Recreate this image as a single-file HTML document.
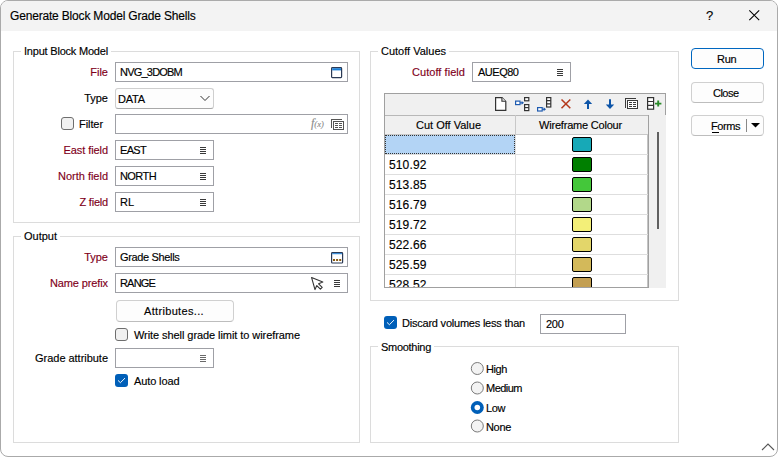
<!DOCTYPE html>
<html><head><meta charset="utf-8"><style>
html,body{margin:0;padding:0;width:778px;height:457px;overflow:hidden;background:#fff;}
body{position:relative;font-family:"Liberation Sans",sans-serif;}
div{position:absolute;}
.t{white-space:nowrap;-webkit-text-stroke:0.15px currentColor;}
</style></head><body>
<div style="left:0;top:0;width:778px;height:457px;border:1px solid #aaaaaa;border-radius:8px;box-sizing:border-box;background:#fff;overflow:hidden;"><div style="left:0;top:0;width:776px;height:30px;background:#f3f3f3;"></div></div>
<div class="t" style="left:10px;top:9px;font-size:12px;line-height:14px;color:#000;letter-spacing:-0.179px;">Generate Block Model Grade Shells</div>
<div class="t" style="left:706px;top:8px;font-size:13px;line-height:15px;color:#000;letter-spacing:-1.234px;">?</div>
<svg style="position:absolute;left:748px;top:9px" width="13" height="13"><path d="M1.3 1.3 L11.2 11.2 M11.2 1.3 L1.3 11.2" stroke="#000" stroke-width="1.05"/></svg>
<div style="left:13px;top:51px;width:347px;height:172px;border:1px solid #dcdcdc;box-sizing:border-box;"></div>
<div style="left:21px;top:46px;width:90px;height:10px;background:#fff;"></div>
<div class="t" style="left:24px;top:45px;font-size:11px;line-height:13px;color:#000;letter-spacing:-0.206px;">Input Block Model</div>
<div class="t" style="right:670px;top:66px;font-size:11px;line-height:13px;color:#80001a;text-align:right;">File</div>
<div style="left:115px;top:62px;width:233px;height:20px;border:1px solid #9fa0a6;box-sizing:border-box;background:#fff;"></div>
<div class="t" style="left:120px;top:66px;font-size:11px;line-height:13px;color:#000;letter-spacing:-0.788px;">NVG_3DOBM</div>
<div class="t" style="right:670px;top:92px;font-size:11px;line-height:13px;color:#000;text-align:right;">Type</div>
<div style="left:115px;top:88px;width:99px;height:21px;border:1px solid #cfcfcf;border-bottom-color:#a8a8a8;border-radius:3px;box-sizing:border-box;background:#fdfdfd;"></div>
<div class="t" style="left:118px;top:93px;font-size:11px;line-height:13px;color:#000;letter-spacing:-0.180px;">DATA</div>
<svg style="position:absolute;left:200px;top:95px" width="10" height="7"><path d="M0.5 1 L5 5.5 L9.5 1" stroke="#333" stroke-width="1" fill="none"/></svg>
<div style="left:61px;top:117px;width:13px;height:13px;border-radius:3px;border:1px solid #6e6e6e;box-sizing:border-box;background:#f1f1f1;"></div>
<div class="t" style="left:79px;top:118px;font-size:11px;line-height:13px;color:#000;letter-spacing:-0.073px;">Filter</div>
<div style="left:115px;top:114px;width:233px;height:20px;border:1px solid #9fa0a6;box-sizing:border-box;background:#fff;"></div>
<div class="t" style="right:670px;top:144px;font-size:11px;line-height:13px;color:#80001a;letter-spacing:-0.078px;text-align:right;">East field</div>
<div style="left:115px;top:140px;width:99px;height:20px;border:1px solid #9fa0a6;box-sizing:border-box;background:#fff;"></div>
<div class="t" style="left:120px;top:144px;font-size:11px;line-height:13px;color:#000;letter-spacing:-0.688px;">EAST</div>
<div style="left:200px;top:147px;width:6px;height:1px;background:#3a3a3a;"></div>
<div style="left:200px;top:149px;width:6px;height:1px;background:#3a3a3a;"></div>
<div style="left:200px;top:151px;width:6px;height:1px;background:#3a3a3a;"></div>
<div style="left:200px;top:153px;width:6px;height:1px;background:#3a3a3a;"></div>
<div class="t" style="right:670px;top:170px;font-size:11px;line-height:13px;color:#80001a;letter-spacing:-0.014px;text-align:right;">North field</div>
<div style="left:115px;top:166px;width:99px;height:20px;border:1px solid #9fa0a6;box-sizing:border-box;background:#fff;"></div>
<div class="t" style="left:120px;top:170px;font-size:11px;line-height:13px;color:#000;letter-spacing:-0.578px;">NORTH</div>
<div style="left:200px;top:173px;width:6px;height:1px;background:#3a3a3a;"></div>
<div style="left:200px;top:175px;width:6px;height:1px;background:#3a3a3a;"></div>
<div style="left:200px;top:177px;width:6px;height:1px;background:#3a3a3a;"></div>
<div style="left:200px;top:179px;width:6px;height:1px;background:#3a3a3a;"></div>
<div class="t" style="right:670px;top:196px;font-size:11px;line-height:13px;color:#80001a;letter-spacing:-0.210px;text-align:right;">Z field</div>
<div style="left:115px;top:192px;width:99px;height:20px;border:1px solid #9fa0a6;box-sizing:border-box;background:#fff;"></div>
<div class="t" style="left:120px;top:196px;font-size:11px;line-height:13px;color:#000;">RL</div>
<div style="left:200px;top:199px;width:6px;height:1px;background:#3a3a3a;"></div>
<div style="left:200px;top:201px;width:6px;height:1px;background:#3a3a3a;"></div>
<div style="left:200px;top:203px;width:6px;height:1px;background:#3a3a3a;"></div>
<div style="left:200px;top:205px;width:6px;height:1px;background:#3a3a3a;"></div>
<div style="left:13px;top:236px;width:347px;height:207px;border:1px solid #dcdcdc;box-sizing:border-box;"></div>
<div style="left:21px;top:231px;width:39.0625px;height:10px;background:#fff;"></div>
<div class="t" style="left:24px;top:230px;font-size:11px;line-height:13px;color:#000;">Output</div>
<div class="t" style="right:670px;top:251px;font-size:11px;line-height:13px;color:#80001a;text-align:right;">Type</div>
<div style="left:115px;top:247px;width:233px;height:20px;border:1px solid #9fa0a6;box-sizing:border-box;background:#fff;"></div>
<div class="t" style="left:120px;top:251px;font-size:11px;line-height:13px;color:#000;letter-spacing:-0.344px;">Grade Shells</div>
<div class="t" style="right:670px;top:277px;font-size:11px;line-height:13px;color:#80001a;letter-spacing:-0.119px;text-align:right;">Name prefix</div>
<div style="left:115px;top:273px;width:233px;height:20px;border:1px solid #9fa0a6;box-sizing:border-box;background:#fff;"></div>
<div class="t" style="left:120px;top:277px;font-size:11px;line-height:13px;color:#000;letter-spacing:-0.825px;">RANGE</div>
<div style="left:334px;top:280px;width:6px;height:1px;background:#3a3a3a;"></div>
<div style="left:334px;top:282px;width:6px;height:1px;background:#3a3a3a;"></div>
<div style="left:334px;top:284px;width:6px;height:1px;background:#3a3a3a;"></div>
<div style="left:334px;top:286px;width:6px;height:1px;background:#3a3a3a;"></div>
<div style="left:116px;top:300px;width:118px;height:22px;border:1px solid #d0d0d0;border-bottom-color:#bdbdbd;border-radius:4px;box-sizing:border-box;background:#fdfdfd;"></div>
<div class="t" style="left:144px;top:305px;font-size:11px;line-height:13px;color:#000;letter-spacing:0.332px;">Attributes...</div>
<div style="left:115px;top:328px;width:13px;height:13px;border-radius:3px;border:1px solid #6e6e6e;box-sizing:border-box;background:#f1f1f1;"></div>
<div class="t" style="left:134px;top:329px;font-size:11px;line-height:13px;color:#000;letter-spacing:-0.071px;">Write shell grade limit to wireframe</div>
<div class="t" style="right:670px;top:352px;font-size:11px;line-height:13px;color:#000;letter-spacing:-0.029px;text-align:right;">Grade attribute</div>
<div style="left:115px;top:348px;width:99px;height:20px;border:1px solid #9fa0a6;box-sizing:border-box;background:#fff;"></div>
<div style="left:200px;top:355px;width:6px;height:1px;background:#6a6a6a;"></div>
<div style="left:200px;top:357px;width:6px;height:1px;background:#6a6a6a;"></div>
<div style="left:200px;top:359px;width:6px;height:1px;background:#6a6a6a;"></div>
<div style="left:200px;top:361px;width:6px;height:1px;background:#6a6a6a;"></div>
<div style="left:115px;top:374px;width:13px;height:13px;border-radius:3px;background:#005fb8;"></div>
<svg style="position:absolute;left:115px;top:374px" width="13" height="13"><path d="M3 6.4 L5.4 8.7 L10 4.1" stroke="#fff" stroke-width="0.95" fill="none"/></svg>
<div class="t" style="left:134px;top:375px;font-size:11px;line-height:13px;color:#000;letter-spacing:-0.115px;">Auto load</div>
<div style="left:370px;top:51px;width:309px;height:250px;border:1px solid #dcdcdc;box-sizing:border-box;"></div>
<div style="left:378px;top:46px;width:71px;height:10px;background:#fff;"></div>
<div class="t" style="left:381px;top:45px;font-size:11px;line-height:13px;color:#000;">Cutoff Values</div>
<div class="t" style="right:313px;top:66px;font-size:11px;line-height:13px;color:#80001a;letter-spacing:0.048px;text-align:right;">Cutoff field</div>
<div style="left:472px;top:62px;width:99px;height:20px;border:1px solid #9fa0a6;box-sizing:border-box;background:#fff;"></div>
<div class="t" style="left:478px;top:66px;font-size:11px;line-height:13px;color:#000;letter-spacing:-0.490px;">AUEQ80</div>
<div style="left:557px;top:69px;width:6px;height:1px;background:#3a3a3a;"></div>
<div style="left:557px;top:71px;width:6px;height:1px;background:#3a3a3a;"></div>
<div style="left:557px;top:73px;width:6px;height:1px;background:#3a3a3a;"></div>
<div style="left:557px;top:75px;width:6px;height:1px;background:#3a3a3a;"></div>
<div style="left:384px;top:93px;width:282px;height:22px;background:#f0f0f0;border:1px solid #a0a0a0;border-bottom:none;box-sizing:border-box;"></div>
<div style="left:384px;top:115px;width:265px;height:173px;background:#fff;border:1px solid #a0a0a0;border-top:none;box-sizing:border-box;"></div>
<div style="left:649px;top:115px;width:17px;height:173px;background:#f0f0f0;"></div>
<div style="left:647px;top:115px;width:1px;height:172px;background:#c4c4c4;"></div>
<div style="left:657px;top:132px;width:2px;height:97px;background:#606060;"></div>
<div style="left:385px;top:115px;width:263px;height:20px;background:#f0f0f0;border-top:1px solid #b8b8b8;border-bottom:1px solid #c8c8c8;box-sizing:border-box;"></div>
<div style="left:515px;top:115px;width:1px;height:20px;background:#c8c8c8;"></div>
<div class="t" style="left:416px;top:119px;font-size:11px;line-height:13px;color:#000;">Cut Off Value</div>
<div class="t" style="left:539px;top:119px;font-size:11px;line-height:13px;color:#000;letter-spacing:-0.199px;">Wireframe Colour</div>
<div style="left:385px;top:135px;width:263px;height:152px;overflow:hidden;">
<div style="left:0;top:0;width:130px;height:19px;background:#b3d4f5;outline:1px dotted #333;outline-offset:-1px;"></div>
<div style="left:0;top:19px;width:263px;height:1px;background:#dedede;"></div>
<div style="left:130px;top:0px;width:1px;height:20px;background:#dedede;"></div>
<div style="left:187px;top:2px;width:20px;height:15px;background:#17a9b7;border:1px solid #000;border-radius:2px;box-sizing:border-box;"></div>
<div style="left:0;top:39px;width:263px;height:1px;background:#dedede;"></div>
<div style="left:130px;top:20px;width:1px;height:20px;background:#dedede;"></div>
<div class="t" style="left:4px;top:23px;font-size:12px;line-height:14px;letter-spacing:0.13px;">510.92</div>
<div style="left:187px;top:22px;width:20px;height:15px;background:#007f00;border:1px solid #000;border-radius:2px;box-sizing:border-box;"></div>
<div style="left:0;top:59px;width:263px;height:1px;background:#dedede;"></div>
<div style="left:130px;top:40px;width:1px;height:20px;background:#dedede;"></div>
<div class="t" style="left:4px;top:43px;font-size:12px;line-height:14px;letter-spacing:0.13px;">513.85</div>
<div style="left:187px;top:42px;width:20px;height:15px;background:#44c73a;border:1px solid #000;border-radius:2px;box-sizing:border-box;"></div>
<div style="left:0;top:79px;width:263px;height:1px;background:#dedede;"></div>
<div style="left:130px;top:60px;width:1px;height:20px;background:#dedede;"></div>
<div class="t" style="left:4px;top:63px;font-size:12px;line-height:14px;letter-spacing:0.13px;">516.79</div>
<div style="left:187px;top:62px;width:20px;height:15px;background:#b2d88a;border:1px solid #000;border-radius:2px;box-sizing:border-box;"></div>
<div style="left:0;top:99px;width:263px;height:1px;background:#dedede;"></div>
<div style="left:130px;top:80px;width:1px;height:20px;background:#dedede;"></div>
<div class="t" style="left:4px;top:83px;font-size:12px;line-height:14px;letter-spacing:0.13px;">519.72</div>
<div style="left:187px;top:82px;width:20px;height:15px;background:#f3ef78;border:1px solid #000;border-radius:2px;box-sizing:border-box;"></div>
<div style="left:0;top:119px;width:263px;height:1px;background:#dedede;"></div>
<div style="left:130px;top:100px;width:1px;height:20px;background:#dedede;"></div>
<div class="t" style="left:4px;top:103px;font-size:12px;line-height:14px;letter-spacing:0.13px;">522.66</div>
<div style="left:187px;top:102px;width:20px;height:15px;background:#e3d66a;border:1px solid #000;border-radius:2px;box-sizing:border-box;"></div>
<div style="left:0;top:139px;width:263px;height:1px;background:#dedede;"></div>
<div style="left:130px;top:120px;width:1px;height:20px;background:#dedede;"></div>
<div class="t" style="left:4px;top:123px;font-size:12px;line-height:14px;letter-spacing:0.13px;">525.59</div>
<div style="left:187px;top:122px;width:20px;height:15px;background:#d3b95a;border:1px solid #000;border-radius:2px;box-sizing:border-box;"></div>
<div style="left:0;top:159px;width:263px;height:1px;background:#dedede;"></div>
<div style="left:130px;top:140px;width:1px;height:20px;background:#dedede;"></div>
<div class="t" style="left:4px;top:143px;font-size:12px;line-height:14px;letter-spacing:0.13px;">528.52</div>
<div style="left:187px;top:142px;width:20px;height:15px;background:#c39f52;border:1px solid #000;border-radius:2px;box-sizing:border-box;"></div>
</div>
<div style="left:384px;top:287px;width:265px;height:1px;background:#a0a0a0;"></div>
<svg style="position:absolute;left:490px;top:94px" width="176" height="20" viewBox="0 0 176 20"><path d="M5.6 3.6 H12 L15.8 7.4 V16.4 H5.6 Z" stroke="#333" stroke-width="1.2" fill="#fff"/><path d="M11.9 3.6 V7.2 H15.8" stroke="#333" stroke-width="1.1" fill="#e6e6e6"/><rect x="25.6" y="7.1" width="4.4" height="3.5" stroke="#1e5bb0" stroke-width="1.2" fill="#fff"/><path d="M30 8.85 H32.4" stroke="#1e5bb0" stroke-width="1.2"/><path d="M31.6 6.9 L34 8.85 L31.6 10.8 Z" fill="#1e5bb0"/><rect x="34.6" y="3.6" width="4.2" height="3.2" stroke="#333" stroke-width="1.2" fill="#fff"/><rect x="34.6" y="10.6" width="4.2" height="6" stroke="#333" stroke-width="1.2" fill="#fff"/><path d="M34.6 13.6 H38.8" stroke="#333" stroke-width="1.2"/><rect x="47.6" y="13.6" width="4.6" height="3.4" stroke="#1e5bb0" stroke-width="1.2" fill="#fff"/><path d="M52.2 15.3 H54.4" stroke="#1e5bb0" stroke-width="1.2"/><path d="M53.6 13.3 L56 15.3 L53.6 17.3 Z" fill="#1e5bb0"/><rect x="56.6" y="3.6" width="4.2" height="9.4" stroke="#333" stroke-width="1.2" fill="#fff"/><path d="M56.6 6.7 H60.8 M56.6 9.9 H60.8" stroke="#333" stroke-width="1.2"/><path d="M71.5 5.5 L80.3 14.3 M80.3 5.5 L71.5 14.3" stroke="#b5391c" stroke-width="1.5"/><path d="M98 15 V7.5" stroke="#0d55a8" stroke-width="2"/><path d="M93.8 10 L98 5.6 L102.2 10 Z" fill="#0d55a8"/><path d="M120 5.3 V12.5" stroke="#0d55a8" stroke-width="2"/><path d="M115.8 10.4 L120 14.9 L124.2 10.4 Z" fill="#0d55a8"/><g shape-rendering="crispEdges"><path d="M135.5 14 V4.5 H146" stroke="#3a3a3a" stroke-width="1" fill="none"/><rect x="137.5" y="6.5" width="10" height="8" stroke="#3a3a3a" stroke-width="1" fill="#fff"/><path d="M139 8.5 H142 M143 8.5 H146 M139 10.5 H142 M143 10.5 H146 M139 12.5 H142 M143 12.5 H146" stroke="#3a3a3a" stroke-width="1"/></g><rect x="157.6" y="3.6" width="6" height="11.6" stroke="#333" stroke-width="1.2" fill="#fff"/><path d="M157.6 7.5 H163.6 M157.6 11.3 H163.6" stroke="#333" stroke-width="1.2"/><path d="M165 9.6 H171.4 M168.2 6.6 V12.6" stroke="#2a8a2a" stroke-width="1.9"/></svg>
<div style="left:384px;top:316px;width:13px;height:13px;border-radius:3px;background:#005fb8;"></div>
<svg style="position:absolute;left:384px;top:316px" width="13" height="13"><path d="M3 6.4 L5.4 8.7 L10 4.1" stroke="#fff" stroke-width="0.95" fill="none"/></svg>
<div class="t" style="left:402px;top:317px;font-size:11px;line-height:13px;color:#000;letter-spacing:-0.217px;">Discard volumes less than</div>
<div style="left:540px;top:314px;width:86px;height:20px;border:1px solid #9fa0a6;box-sizing:border-box;background:#fff;"></div>
<div class="t" style="left:546px;top:318px;font-size:11px;line-height:13px;color:#000;letter-spacing:-0.292px;">200</div>
<div style="left:370px;top:346px;width:309px;height:97px;border:1px solid #dcdcdc;box-sizing:border-box;"></div>
<div style="left:378px;top:341px;width:56px;height:10px;background:#fff;"></div>
<div class="t" style="left:381px;top:341px;font-size:11px;line-height:13px;color:#000;letter-spacing:-0.292px;">Smoothing</div>
<div class="t" style="left:486px;top:363px;font-size:11px;line-height:13px;color:#000;letter-spacing:-0.406px;">High</div>
<div class="t" style="left:486px;top:382px;font-size:11px;line-height:13px;color:#000;letter-spacing:-0.521px;">Medium</div>
<div class="t" style="left:486px;top:402px;font-size:11px;line-height:13px;color:#000;letter-spacing:-0.396px;">Low</div>
<div class="t" style="left:486px;top:421px;font-size:11px;line-height:13px;color:#000;letter-spacing:-0.328px;">None</div>
<svg style="position:absolute;left:460px;top:355px" width="40" height="85"><circle cx="17.3" cy="13.5" r="6" fill="#f3f3f3" stroke="#7a7a7a" stroke-width="1"/><circle cx="17.3" cy="33" r="6" fill="#f3f3f3" stroke="#7a7a7a" stroke-width="1"/><circle cx="17.3" cy="52.5" r="6.5" fill="#005fb8"/><circle cx="17.3" cy="52.5" r="2.8" fill="#fff"/><circle cx="17.3" cy="71" r="6" fill="#f3f3f3" stroke="#7a7a7a" stroke-width="1"/></svg>
<div style="left:691px;top:48px;width:73px;height:21px;border:1.5px solid #0067c0;border-radius:4px;box-sizing:border-box;background:#fdfdfd;"></div>
<div class="t" style="left:717px;top:53px;font-size:11px;line-height:13px;color:#000;letter-spacing:-0.229px;">Run</div>
<div style="left:691px;top:82px;width:73px;height:21px;border:1px solid #d0d0d0;border-bottom-color:#bdbdbd;border-radius:4px;box-sizing:border-box;background:#fdfdfd;"></div>
<div class="t" style="left:713px;top:87px;font-size:11px;line-height:13px;color:#000;letter-spacing:-0.525px;">Close</div>
<div style="left:691px;top:115px;width:73px;height:21px;border:1px solid #d0d0d0;border-bottom-color:#bdbdbd;border-radius:4px;box-sizing:border-box;background:#fdfdfd;"></div>
<div class="t" style="left:711px;top:120px;font-size:11px;line-height:13px;color:#000;letter-spacing:-0.431px;">Forms</div>
<div style="left:746px;top:119px;width:1px;height:13px;background:#888;"></div>
<svg style="position:absolute;left:751px;top:123px" width="9" height="5"><path d="M0 0 L9 0 L4.5 4.5 Z" fill="#000"/></svg>
<div style="left:712px;top:132px;width:7px;height:1px;background:#000;"></div>
<svg style="position:absolute;left:326px;top:63px" width="20" height="20"><rect x="5.6" y="4.6" width="10" height="10" rx="0.8" stroke="#2b3a55" stroke-width="1.2" fill="#fff"/><rect x="6.2" y="5.2" width="8.8" height="2.2" fill="#1c7fd6"/></svg>
<div class="t" style="left:311px;top:116px;font-family:'Liberation Serif',serif;font-style:italic;font-size:12px;line-height:14px;color:#8a8a8a;">f<span style="font-size:8.5px">(x)</span></div>
<svg style="position:absolute;left:326px;top:114px" width="20" height="20" shape-rendering="crispEdges"><path d="M5 13.5 V5 H16" stroke="#555" stroke-width="1" fill="none"/><rect x="7.5" y="7.5" width="10" height="8" stroke="#555" stroke-width="1" fill="#fff"/><path d="M9 9.5 H12 M13 9.5 H16 M9 11.5 H12 M13 11.5 H16 M9 13.5 H12 M13 13.5 H16" stroke="#555" stroke-width="1"/></svg>
<svg style="position:absolute;left:326px;top:248px" width="20" height="20"><rect x="5.6" y="4.6" width="11" height="10.4" rx="0.8" stroke="#2b3a55" stroke-width="1.2" fill="#fff"/><rect x="6.2" y="5.2" width="9.8" height="1" fill="#1c7fd6"/><rect x="7" y="11" width="2" height="2" fill="#8a5a10"/><rect x="10.1" y="11" width="2" height="2" fill="#8a5a10"/><rect x="13.2" y="11" width="2" height="2" fill="#8a5a10"/></svg>
<svg style="position:absolute;left:306px;top:272px" width="20" height="20"><path d="M5.6 5.6 L16.8 10 L12.6 11.8 L16.2 15.4 L14.4 17.2 L10.8 13.6 L9 17.6 Z" stroke="#333" stroke-width="1.1" fill="#fff" stroke-linejoin="round"/></svg>
<svg style="position:absolute;left:761px;top:443px" width="14" height="8"><path d="M1 7 L7 1 L13 7" stroke="#555" stroke-width="1.1" fill="none"/></svg>
</body></html>
